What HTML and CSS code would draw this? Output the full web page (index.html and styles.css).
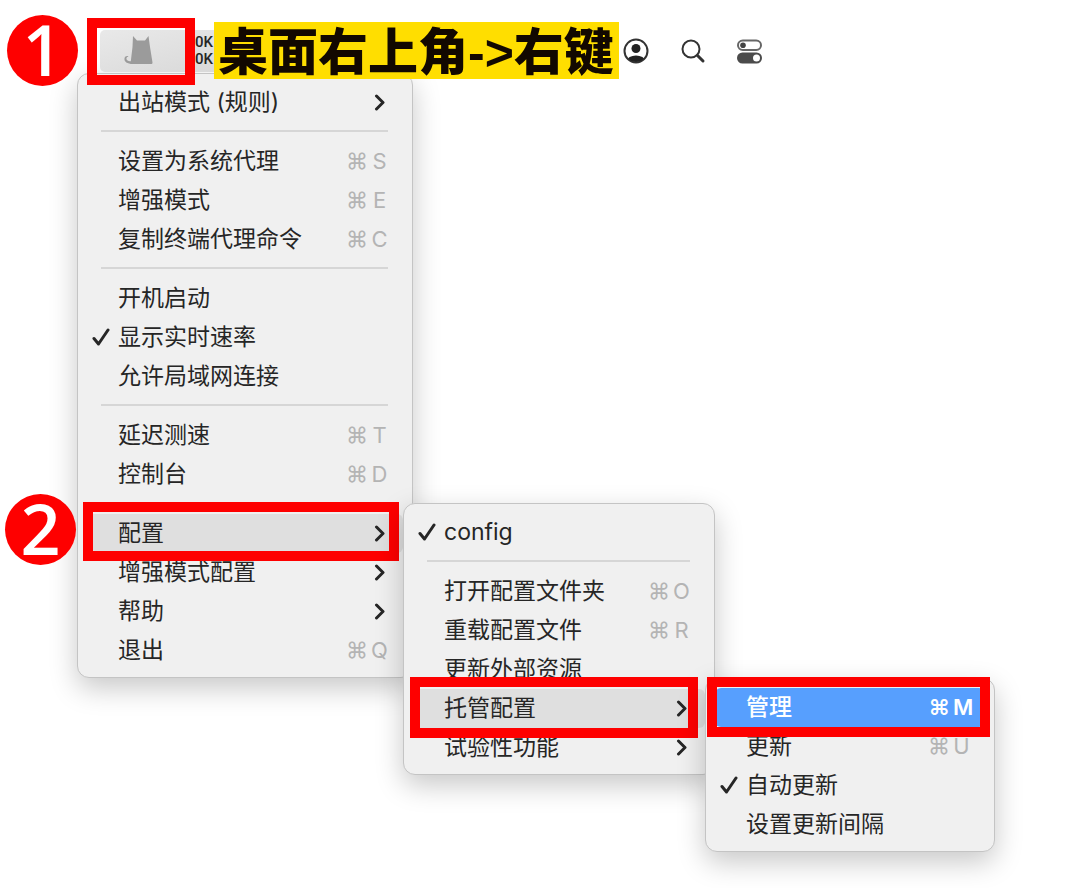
FILE: index.html
```html
<!DOCTYPE html>
<html lang="zh-CN">
<head>
    <meta charset="UTF-8">
    <meta name="viewport" content="width=device-width, initial-scale=1.0">
    <title>托管配置 - 管理</title>
    <link rel="stylesheet" href="styles.css">
</head>
<body>
    <!-- Shared icons -->
    <svg class="sprite" aria-hidden="true">
        <symbol id="check" viewBox="0 0 18 20">
            <path d="M2 10.5 L6.5 16 L16 2" fill="none" stroke="currentColor" stroke-width="3" stroke-linecap="round" stroke-linejoin="round"/>
        </symbol>
        <symbol id="chevron" viewBox="0 0 12 18">
            <path d="M2.5 2 L9 8.5 L2.5 15" fill="none" stroke="currentColor" stroke-width="3" stroke-linecap="round" stroke-linejoin="round"/>
        </symbol>
    </svg>

    <header class="menubar">
        <span class="badge">1</span>
        <div class="status">
            <button class="status-app" aria-label="Clash">
                <svg class="cat" viewBox="0 0 30 30">
                    <path d="M9 0 L13 4.500 H21 L24.500 0 L26 11 L28.500 26.500 Q28.500 28 27.500 28 H9 C3 28 0 25.500 0.500 22.500 C0.800 20 3.500 19.500 4.500 20.500 C2.300 21 1.800 23 3.200 24.200 C4.500 25.200 5.500 25.500 6.800 25.200 L8.500 11 Z" fill="#9b9b9b"/>
                </svg>
            </button>
            <div class="traffic"><span>0K</span><span>0K</span></div>
            <div class="frame frame-status"></div>
        </div>
        <h1 class="hint">桌面右上角-&gt;右键</h1>
        <nav class="tray">
            <button aria-label="用户">
                <svg width="28" height="28" viewBox="0 0 28 28">
                    <clipPath id="face"><circle cx="14" cy="14" r="11"/></clipPath>
                    <circle cx="14" cy="14" r="11.500" fill="none" stroke="#333" stroke-width="2"/>
                    <circle cx="14" cy="11.500" r="4.500" fill="#222"/>
                    <ellipse cx="14" cy="24" rx="9" ry="5.500" fill="#222" clip-path="url(#face)"/>
                </svg>
            </button>
            <button aria-label="搜索">
                <svg width="28" height="28" viewBox="0 0 28 28">
                    <circle cx="12" cy="12" r="8.500" fill="none" stroke="#333" stroke-width="2"/>
                    <path d="M18.500 18.500 L24 24" stroke="#333" stroke-width="3" stroke-linecap="round"/>
                </svg>
            </button>
            <button aria-label="控制中心">
                <svg width="28" height="28" viewBox="0 0 28 28">
                    <rect x="2" y="3.500" width="23" height="9.500" rx="4.750" fill="#fff" stroke="#666" stroke-width="2"/>
                    <circle cx="7" cy="8.200" r="2.800" fill="#444"/>
                    <rect x="1" y="15.500" width="25" height="11" rx="5.500" fill="#4b4b4b"/>
                    <circle cx="20.500" cy="21" r="3.500" fill="#fff"/>
                </svg>
            </button>
        </nav>
    </header>

    <ul class="menu menu-main">
        <li><button class="item"><span class="mark"></span>出站模式 (规则)<svg class="arrow"><use href="#chevron"/></svg></button></li>
        <li class="separator"></li>
        <li><button class="item"><span class="mark"></span>设置为系统代理<kbd>⌘<b>S</b></kbd></button></li>
        <li><button class="item"><span class="mark"></span>增强模式<kbd>⌘<b>E</b></kbd></button></li>
        <li><button class="item"><span class="mark"></span>复制终端代理命令<kbd>⌘<b>C</b></kbd></button></li>
        <li class="separator"></li>
        <li><button class="item"><span class="mark"></span>开机启动</button></li>
        <li><button class="item"><span class="mark"><svg><use href="#check"/></svg></span>显示实时速率</button></li>
        <li><button class="item"><span class="mark"></span>允许局域网连接</button></li>
        <li class="separator"></li>
        <li><button class="item"><span class="mark"></span>延迟测速<kbd>⌘<b>T</b></kbd></button></li>
        <li><button class="item"><span class="mark"></span>控制台<kbd>⌘<b>D</b></kbd></button></li>
        <li class="separator"></li>
        <li class="open">
            <button class="item"><span class="mark"></span>配置<svg class="arrow"><use href="#chevron"/></svg></button>
            <div class="frame frame-config"></div>
            <span class="badge badge-config">2</span>

            <ul class="menu submenu menu-config">
                <li><button class="item"><span class="mark"><svg><use href="#check"/></svg></span>config</button></li>
                <li class="separator"></li>
                <li><button class="item"><span class="mark"></span>打开配置文件夹<kbd>⌘<b>O</b></kbd></button></li>
                <li><button class="item"><span class="mark"></span>重载配置文件<kbd>⌘<b>R</b></kbd></button></li>
                <li><button class="item"><span class="mark"></span>更新外部资源</button></li>
                <li class="open">
                    <button class="item"><span class="mark"></span>托管配置<svg class="arrow"><use href="#chevron"/></svg></button>
                    <div class="frame frame-hosted"></div>

                    <ul class="menu submenu menu-hosted">
                        <li class="selected">
                            <button class="item"><span class="mark"></span>管理<kbd>⌘<b>M</b></kbd></button>
                            <div class="frame frame-manage"></div>
                        </li>
                        <li><button class="item"><span class="mark"></span>更新<kbd>⌘<b>U</b></kbd></button></li>
                        <li><button class="item"><span class="mark"><svg><use href="#check"/></svg></span>自动更新</button></li>
                        <li><button class="item"><span class="mark"></span>设置更新间隔</button></li>
                    </ul>
                </li>
                <li><button class="item"><span class="mark"></span>试验性功能<svg class="arrow"><use href="#chevron"/></svg></button></li>
            </ul>
        </li>
        <li><button class="item"><span class="mark"></span>增强模式配置<svg class="arrow"><use href="#chevron"/></svg></button></li>
        <li><button class="item"><span class="mark"></span>帮助<svg class="arrow"><use href="#chevron"/></svg></button></li>
        <li><button class="item"><span class="mark"></span>退出<kbd>⌘<b>Q</b></kbd></button></li>
    </ul>
</body>
</html>
```

FILE: styles.css
```css
* {
    margin: 0;
    padding: 0;
    box-sizing: border-box;
}
body {
    min-height: 100vh;
    font-family: Inter, "Noto Sans CJK SC", sans-serif;
    background-color: #fff;
    color: #262626;
}
button {
    border: none;
    background: none;
    font: inherit;
    color: inherit;
}
ul {
    list-style: none;
}
.sprite {
    position: absolute;
    width: 0;
    height: 0;
}

/* Menu bar */
.menubar {
    position: relative;
    z-index: 2;
    display: flex;
    align-items: center;
    height: 73px;
    padding: 28px 0 0 7px;
}
.badge {
    display: flex;
    flex: none;
    align-items: center;
    justify-content: center;
    width: 71px;
    height: 71px;
    padding-bottom: 4px;
    border-radius: 50%;
    background-color: #fe0000;
    color: #fff;
    font: 600 70px/70px "Open Sans", sans-serif;
}
.status {
    position: relative;
    display: flex;
    align-items: center;
    height: 42px;
    margin-left: 22px;
    border-radius: 5px 0 0 5px;
    background: linear-gradient(165deg, #e9e9e9, #d9d9d9);
}
.status-app {
    display: flex;
    width: 95px;
    padding-left: 24px;
}
.cat {
    width: 30px;
    height: 30px;
}
.traffic {
    display: flex;
    flex-direction: column;
    width: 19px;
    font: 500 15px/17px Roboto, sans-serif;
}
.hint {
    padding: 6px 5px 0 4px;
    background-color: #ffde00;
    color: #120800;
    font: 900 50px/51px "Liberation Sans", "Noto Sans CJK SC", sans-serif;
    white-space: nowrap;
}
.tray {
    display: flex;
    gap: 29px;
    margin-left: 3px;
}
.tray svg {
    display: block;
}

/* Menus */
.menu {
    width: max-content;
    padding: 9px 9px 7px;
    border: 1px solid #c4c4c4;
    border-radius: 12px;
    background-color: #f0f0f0;
    box-shadow: 0 10px 28px rgba(0, 0, 0, 0.22);
}
.menu li {
    position: relative;
}
.menu-main {
    min-width: 336px;
    margin-left: 77px;
}
.submenu {
    position: absolute;
    z-index: 2;
    top: -11px;
    left: 100%;
}
.menu-config {
    min-width: 312px;
}
.menu-hosted {
    min-width: 290px;
}
.item {
    display: flex;
    align-items: center;
    width: 100%;
    height: 39px;
    padding-right: 15px;
    border-radius: 6px;
    font-size: 23px;
    line-height: 39px;
    white-space: nowrap;
}
.open > .item {
    background-color: #dfdfdf;
}
.selected > .item {
    background-color: #579ffe;
    color: #fff;
    font-weight: 500;
}
.mark {
    width: 31px;
    padding-left: 5px;
}
.mark svg {
    display: block;
    width: 18px;
    height: 20px;
}
.arrow {
    width: 12px;
    height: 18px;
    margin-left: auto;
    margin-right: 2px;
}
kbd {
    display: flex;
    gap: 3px;
    margin-left: auto;
    padding-left: 24px;
    color: #b4b4b4;
    font-family: Inter, "DejaVu Sans", sans-serif;
    font-size: 22px;
}
kbd b {
    width: 17px;
    font-weight: 400;
    text-align: center;
}
.selected kbd,
.selected kbd b {
    color: #fff;
    font-weight: 600;
}
.separator {
    height: 20px;
    padding: 8px 15px 10px 14px;
}
.separator::before {
    content: "";
    display: block;
    height: 2px;
    background-color: #d6d6d6;
}

/* Step markers */
.frame {
    position: absolute;
    z-index: 1;
    border: 10px solid #fe0000;
    pointer-events: none;
}
.frame-status {
    inset: -12px 19px -13px -13px;
}
.frame-config {
    inset: -12px 4px -8px -4px;
}
.frame-hosted {
    inset: -12px 7px -10px -3px;
}
.frame-manage {
    inset: -11px -5px -10px -8px;
}
.badge-config {
    position: absolute;
    top: -20px;
    left: -82px;
}
```
